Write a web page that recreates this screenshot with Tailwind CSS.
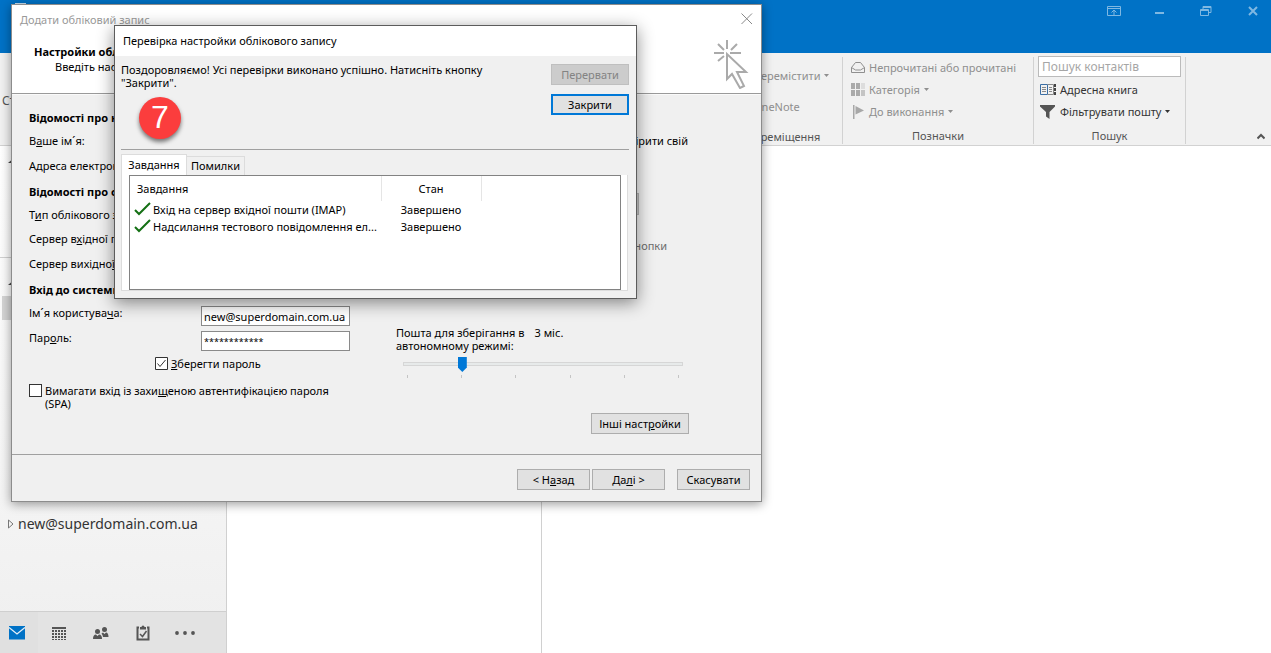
<!DOCTYPE html>
<html lang="uk">
<head>
<meta charset="utf-8">
<title>Outlook</title>
<script src="https://cdn.jsdelivr.net/npm/@tailwindcss/browser@4"></script>
</head>
<body class="relative flex h-screen flex-col overflow-hidden bg-white font-['Noto_Sans','Open_Sans',sans-serif] text-[11px] leading-[13px] text-black">

<header class="flex h-[53px] shrink-0 items-start justify-between bg-[#0072c6] pt-[3px] pr-3 pl-3.5">
  <svg class="h-4 w-4 text-white/80" viewBox="0 0 16 16" fill="none" stroke="currentColor"><rect x="1.5" y=".5" width="10" height="10"/></svg>
  <div class="flex text-[#7fb8e2]">
    <button aria-label="Параметри стрічки" class="flex h-4 w-[46px] items-center justify-end"><svg class="h-3 w-3.5" viewBox="0 0 14 12" fill="none" stroke="currentColor"><path d="M.5 1.500h13v9H.5zM.5 3.500h13M7 10V5.500M4.500 7.500 7 5l2.500 2.500"/></svg></button>
    <button aria-label="Згорнути" class="flex h-4 w-[46px] items-center justify-end pr-0.5"><svg class="h-3 w-2.5" viewBox="0 0 10 12"><path fill="currentColor" d="M0 7h9v2H0z"/></svg></button>
    <button aria-label="Відновити" class="flex h-4 w-[46px] items-center justify-end pr-px"><svg class="h-3 w-3" viewBox="0 0 12 12" fill="none" stroke="currentColor"><path d="M.5 4.500h8v6h-8zM.5 5.500h8M3 4V1.500h8v6H9M3 2.500h8"/></svg></button>
    <button aria-label="Закрити Outlook" class="flex h-4 w-[46px] items-center justify-end"><svg class="h-3 w-3" viewBox="0 0 12 12" fill="none" stroke="currentColor" stroke-width="2"><path d="m2 2 8 8m0-8-8 8"/></svg></button>
  </div>
</header>

<section aria-label="Стрічка" class="flex h-[93px] shrink-0 border-b border-[#d2d2d2] bg-[#f1f1f1] pt-[3px] leading-4 text-[#8f8f8f]">
  <div class="flex w-[725px] shrink-0 items-center pl-0.5 text-xs text-[#555]">Створити</div>
  <div class="my-px flex w-[118px] shrink-0 flex-col border-r border-[#d2d2d2]">
    <button class="mt-[11px] ml-7 flex items-center gap-1 whitespace-nowrap">Перемістити<svg class="h-1 w-[5px]" viewBox="0 0 5 4"><path fill="currentColor" d="M0 0h5L2.500 3z"/></svg></button>
    <button class="mt-[15px] ml-7 self-start">OneNote</button>
    <div class="mt-3.5 text-center text-[#555]">Переміщення</div>
  </div>
  <div class="my-px flex w-[191px] shrink-0 flex-col border-r border-[#d2d2d2] pl-2">
    <button class="flex h-[23px] items-center gap-1 whitespace-nowrap"><svg class="h-3.5 w-3.5" viewBox="0 0 14 14" fill="none" stroke="currentColor"><path d="M.5 11.500v-5l4-5h5l4 5v5zM.5 6.500 4.500 9h5l4-2.500"/></svg>Непрочитані або прочитані</button>
    <button class="flex h-[23px] items-center gap-1"><svg class="h-3.5 w-3.5" viewBox="0 0 14 14" fill="#aaa"><path d="M0 0h4v6H0zM5 0h4v6H5zM0 7h4v6H0zM5 7h4v6H5z"/><path fill="#ddd" d="M10 0h4v6h-4z"/><path fill="#c4c4c4" d="M10 7h4v6h-4z"/></svg>Категорія<svg class="h-1 w-[5px]" viewBox="0 0 5 4"><path fill="currentColor" d="M0 0h5L2.500 3z"/></svg></button>
    <button class="flex h-[23px] items-center gap-1"><svg class="h-3.5 w-3.5" viewBox="0 0 14 14" fill="#a8a8a8"><path d="M2 0h1.500v14H2zM4.500 1 13 5.500l-8.500 4z"/></svg>До виконання<svg class="h-1 w-[5px]" viewBox="0 0 5 4"><path fill="currentColor" d="M0 0h5L2.500 3z"/></svg></button>
    <div class="mt-[5px] pr-2 text-center text-[#555]">Позначки</div>
  </div>
  <div class="my-px flex w-[152px] shrink-0 flex-col border-r border-[#d2d2d2] px-1 text-[#333]">
    <input aria-label="Пошук контактів" placeholder="Пошук контактів" class="-mt-px h-[22px] w-full border border-[#bbb] bg-white px-[3px] text-xs placeholder:text-[#a6a6a6]">
    <button class="mt-px flex h-[23px] items-center gap-1 pl-0.5 whitespace-nowrap"><svg class="h-3.5 w-4" viewBox="0 0 16 14" fill="none"><path stroke="#3a6ea5" d="M7.500 1.500H.5v10h7v-10"/><path stroke="#888" d="M7.500 1.500h6v10h-6M2 4.500h4M2 6.500h4M2 8.500h4M9 4.500h3M9 6.500h3M9 8.500h3"/><path stroke="#444" stroke-width="2" stroke-dasharray="3 1" d="M15 1v11"/></svg>Адресна книга</button>
    <button class="flex h-[23px] items-center gap-1 pl-0.5 whitespace-nowrap"><svg class="h-3.5 w-4" viewBox="0 0 16 14"><path fill="#555" d="M0 0h15v1.500L9.500 7v7L6 11.500V7L0 1.500z"/></svg>Фільтрувати пошту<svg class="h-1 w-[5px]" viewBox="0 0 5 4"><path fill="currentColor" d="M0 0h5L2.500 3z"/></svg></button>
    <div class="mt-[5px] text-center text-[#555]">Пошук</div>
  </div>
  <div class="flex flex-1 items-end justify-end pr-1.5 pb-1">
    <button aria-label="Згорнути стрічку" class="text-[#555]"><svg class="h-2 w-2" viewBox="0 0 8 8" fill="none" stroke="currentColor" stroke-width="2"><path d="m.5 5.500 3.500-3.500 3.500 3.500"/></svg></button>
  </div>
</section>

<main class="flex min-h-0 flex-1">
  <nav class="flex w-[227px] shrink-0 flex-col border-r border-[#d0d0d0] bg-linear-to-b from-white to-[#efefef] text-[#333]">
    <div class="h-28 border-b border-[#d0d0d0] pt-3 pl-2"><svg class="h-1.5 w-1.5" viewBox="0 0 6 6"><path fill="#444" d="M6 0v5H0z"/></svg></div>
    <div class="pt-[22px] pl-2"><svg class="h-1.5 w-1.5" viewBox="0 0 6 6"><path fill="#444" d="M6 0v5H0z"/></svg></div>
    <div class="mt-2.5 ml-0.5 h-6 bg-[#d4d4d4]"></div>
    <button class="mt-[192px] flex h-6 items-center gap-1 pl-2 text-sm"><svg class="h-2.5 w-1.5" viewBox="0 0 6 10" fill="none" stroke="#777"><path d="M.5 1 5 5 .5 9z"/></svg>new@superdomain.com.ua</button>
    <div class="mt-auto flex h-[42px] items-center border-t border-[#cfcfcf] bg-[#e3e3e3] text-[#555]">
      <button aria-label="Пошта" class="flex h-full w-[38px] items-center justify-center bg-[#e0e0e0] pr-1"><svg class="h-3.5 w-4" viewBox="0 0 16 14"><path fill="#0072c6" d="M0 0h16v13.500H0z"/><path fill="none" stroke="#e6f0f8" stroke-width="1.300" d="m0 1.500 8 6.500 8-6.500"/></svg></button>
      <button aria-label="Календар" class="flex w-[42px] justify-center"><svg class="h-3.5 w-3.5" viewBox="0 0 14 14"><path fill="currentColor" d="M0 1h14v2H0z"/><path stroke="currentColor" stroke-width="2" stroke-dasharray="2 1" d="M0 5h14M0 8h14M0 11h14"/><path stroke="currentColor" stroke-dasharray="2 1" d="M0 13.500h14"/></svg></button>
      <button aria-label="Люди" class="flex w-[42px] justify-center"><svg class="h-3.5 w-4" viewBox="0 0 16 14" fill="currentColor"><circle cx="11.500" cy="3.500" r="2.500"/><path d="M8.500 7.500 10 6.500l1.500 1.500L13 6.500c1.500.2 2.500 1.500 2.500 4.500H10c-.2-1.500-.8-2.500-1.500-3.500"/><circle cx="4.500" cy="5.500" r="2.500"/><path d="M0 13c0-3 1-4.500 3-4.500L4.500 10 6 8.500c2 0 3 1.500 3 4.500z"/></svg></button>
      <button aria-label="Завдання пошти" class="flex w-[42px] justify-center"><svg class="h-4 w-3.5" viewBox="0 0 14 16" fill="none" stroke="currentColor" stroke-width="2"><path d="M3 2.500H1.500v12h11v-12H11"/><path fill="currentColor" stroke="none" d="M4 2h1.500a1.500 1.500 0 0 1 3 0H10v2.500H4z"/><path stroke-width="1.500" d="m4 9 2.500 2.500L10.500 6"/></svg></button>
      <button aria-label="Більше" class="flex w-[42px] justify-center"><svg class="h-1 w-5" viewBox="0 0 20 4" fill="currentColor"><circle cx="2" cy="2" r="1.900"/><circle cx="10" cy="2" r="1.900"/><circle cx="18" cy="2" r="1.900"/></svg></button>
    </div>
  </nav>
  <div class="w-[315px] shrink-0 border-r border-[#d0d0d0]"></div>
  <div class="flex-1"></div>
</main>

<!-- Account wizard window -->
<section role="dialog" aria-label="Додати обліковий запис" class="absolute top-1 left-[11px] flex w-[751px] flex-col border border-[#8c8c8c] bg-[#f0f0f0] shadow-[0_2px_10px_rgba(0,0,0,0.4)]">
  <div class="flex h-[89px] justify-between border-b border-[#9a9a9a] bg-white pl-2">
    <div>
      <h1 class="mt-[7px] leading-4 text-[#999]">Додати обліковий запис</h1>
      <h2 class="mt-[17px] ml-3.5 font-bold">Настройки облікового запису</h2>
      <p class="mt-0.5 ml-[35px]">Введіть настройки поштового сервера</p>
    </div>
    <div class="flex flex-col items-end pt-2 pr-2">
      <button aria-label="Закрити вікно" class="text-[#888]"><svg class="h-3 w-3" viewBox="0 0 12 12" fill="none" stroke="currentColor"><path d="m.5.500 10.500 10.500M11 .500.500 11"/></svg></button>
      <svg class="mt-3.5 mr-1 h-[50px] w-9" viewBox="0 0 36 50" fill="none" stroke="#aaa" stroke-width="2"><path d="M14 1v9M1 14h10M17 14h11M5 5l6 6M24 5l-6 6M5 22l6-5"/><path d="M14 15v25l5-5 8 14 4-2-7-14h9z"/></svg>
    </div>
  </div>

  <div class="flex h-[360px] border-t border-[#fafafa] pt-2.5 pl-[17px]">
    <form class="flex w-[367px] shrink-0 flex-col whitespace-nowrap">
      <h3 class="flex h-6 items-center font-bold">Відомості про користувача</h3>
      <p class="flex h-6 items-center pb-0.5"><span>В<u>а</u>ше ім´я:</span></p>
      <p class="flex h-6 items-center">Адреса електронної пошти:</p>
      <h3 class="mt-0.5 flex h-6 items-center font-bold">Відомості про сервер</h3>
      <p class="flex h-6 items-center pb-0.5"><span>Т<u>и</u>п облікового запису:</span></p>
      <p class="flex h-6 items-center pb-0.5"><span>Сервер в<u>х</u>ідної пошти:</span></p>
      <p class="flex h-6 items-center"><span>Сервер вихідно<u>ї</u> пошти (SMTP):</span></p>
      <h3 class="mt-0.5 flex h-6 items-center font-bold">Вхід до системи</h3>
      <div class="flex h-6 items-center"><label for="user" class="w-[172px] pb-0.5">Ім´я користува<u>ч</u>а:</label><input id="user" value="new@superdomain.com.ua" class="mt-1.5 h-5 w-[149px] border border-[#8a8a8a] bg-white px-0.5"></div>
      <div class="flex h-6 items-center"><label for="pass" class="w-[172px]">Пар<u>о</u>ль:</label><input id="pass" value="************" class="mt-2 h-5 w-[149px] border border-[#8a8a8a] bg-white px-0.5 text-[9px]"></div>
      <label class="mt-2 ml-[126px] flex items-center gap-[3px]"><input type="checkbox" checked class="peer sr-only"><svg class="h-[13px] w-[13px]" viewBox="0 0 13 13" fill="#fff" stroke="#333"><path d="M.5.500h12v12H.5z"/><path fill="none" d="m2.500 6.500 2.500 3 5.500-6.500"/></svg><span><u>З</u>берегти пароль</span></label>
      <label class="mt-3.5 flex items-start gap-[3px]"><input type="checkbox" class="h-[13px] w-[13px] appearance-none border border-[#333] bg-white"><span>Вимагати вхід із захи<u>щ</u>еною автентифікацією пароля<br>(SPA)</span></label>
    </form>
    <div class="flex w-[293px] flex-col">
      <p class="mt-[29px] pr-px text-right">Перевірити свій</p>
      <div class="mt-[46px] mr-[50px] h-[22px] w-28 self-end border border-[#b5b5b5] bg-[#ccc]"></div>
      <p class="mt-6 mr-[22px] text-right text-[#6d6d6d]">кнопки</p>
      <div class="mt-[74px] flex gap-2.5"><label for="offline">Пошта для зберігання в<br>автономному режимі:</label><span>3 міс.</span></div>
      <input id="offline" type="range" min="0" max="5" value="1" class="mt-[5px] ml-[7px] h-3.5 w-[280px] appearance-none bg-transparent [&::-webkit-slider-runnable-track]:h-1 [&::-webkit-slider-runnable-track]:border [&::-webkit-slider-runnable-track]:border-[#d6d6d6] [&::-webkit-slider-runnable-track]:bg-[#e7eaea] [&::-webkit-slider-thumb]:-mt-1.5 [&::-webkit-slider-thumb]:h-[15px] [&::-webkit-slider-thumb]:w-[9px] [&::-webkit-slider-thumb]:appearance-none [&::-webkit-slider-thumb]:bg-[#0078d7] [&::-webkit-slider-thumb]:[clip-path:polygon(0_0,100%_0,100%_70%,50%_100%,0_70%)]">
      <div class="mt-1 ml-[11px] flex h-[3px] w-[272px] justify-between"><i class="w-px bg-[#c4c4c4]"></i><i class="w-px bg-[#c4c4c4]"></i><i class="w-px bg-[#c4c4c4]"></i><i class="w-px bg-[#c4c4c4]"></i><i class="w-px bg-[#c4c4c4]"></i><i class="w-px bg-[#c4c4c4]"></i></div>
      <button class="mt-[35px] h-[21px] w-[98px] self-end border border-[#adadad] bg-[#e1e1e1]">Інші наст<u>р</u>ойки</button>
    </div>
  </div>

  <div class="flex justify-end border-t border-[#a0a0a0] pt-3.5 pr-[11px] pb-[11px]">
    <button class="h-[21px] w-[73px] border border-[#adadad] bg-[#e1e1e1]">&lt; Н<u>а</u>зад</button>
    <button class="ml-0.5 h-[21px] w-[73px] border border-[#adadad] bg-[#e1e1e1]">Да<u>л</u>і &gt;</button>
    <button class="ml-3 h-[21px] w-[73px] border border-[#adadad] bg-[#e1e1e1]">Скасувати</button>
  </div>
</section>

<!-- Account test results window -->
<section role="dialog" aria-label="Перевірка настройки облікового запису" class="absolute top-[25px] left-[114px] flex w-[523px] flex-col border border-[#5c5c5c] bg-[#f0f0f0] shadow-[0_4px_16px_rgba(0,0,0,0.45)]">
  <h2 class="flex h-[30px] items-center bg-white pb-0.5 pl-2">Перевірка настройки облікового запису</h2>
  <div class="mr-[7px] ml-1.5 flex h-[94px] justify-between border-b border-[#a0a0a0] pt-[7px]">
    <div>
      <p class="w-[380px]">Поздоровляємо! Усі перевірки виконано успішно. Натисніть кнопку "Закрити".</p>
      <div class="mt-2 ml-[18px] flex h-[42px] w-[42px] items-center justify-center rounded-full bg-[#fb3d3d] pb-px font-['Liberation_Sans',sans-serif] text-[32px] text-white shadow-[0_3px_4px_rgba(0,0,0,0.5)]">7</div>
    </div>
    <div class="flex flex-col gap-[9px] pt-px">
      <button disabled class="h-[21px] w-[78px] border border-[#bfbfbf] bg-[#ccc] text-[#838383]">Перервати</button>
      <button class="h-[21px] w-[78px] border-2 border-[#0078d7] bg-[#e1e1e1]">Закрити</button>
    </div>
  </div>
  <div class="mt-1 mr-2 mb-[7px] ml-1.5">
    <div class="flex items-end" role="tablist">
      <button role="tab" aria-selected="true" class="h-[21px] w-[66px] border border-b-0 border-[#dcdcdc] bg-white pb-0.5">Завдання</button>
      <button role="tab" aria-selected="false" class="h-[19px] w-[58px] border border-b-0 border-l-0 border-[#dcdcdc] pb-px">Помилки</button>
    </div>
    <div class="h-[116px] border border-t-0 border-[#dcdcdc] bg-white pr-1.5 pl-[7px]">
      <div class="h-[115px] border border-[#828282]">
        <table class="table-fixed border-collapse text-left">
          <colgroup><col class="w-[251px]"><col class="w-[100px]"></colgroup>
          <thead><tr class="h-[25px]"><th class="border-r border-[#e5e5e5] pl-[7px] font-normal">Завдання</th><th class="border-r border-[#e5e5e5] text-center font-normal">Стан</th></tr></thead>
          <tbody>
            <tr class="h-[17px]"><td class="pl-1"><div class="flex items-center gap-0.5"><svg class="h-4 w-[17px]" viewBox="0 0 17 16" fill="none" stroke="#147014" stroke-width="2"><path d="m1 8 4 4L16 1"/></svg>Вхід на сервер вхідної пошти (IMAP)</div></td><td class="text-center">Завершено</td></tr>
            <tr class="h-[17px]"><td class="pl-1"><div class="flex items-center gap-0.5"><svg class="h-4 w-[17px]" viewBox="0 0 17 16" fill="none" stroke="#147014" stroke-width="2"><path d="m1 8 4 4L16 1"/></svg>Надсилання тестового повідомлення ел...</div></td><td class="text-center">Завершено</td></tr>
          </tbody>
        </table>
      </div>
    </div>
  </div>
</section>
</body>
</html>
